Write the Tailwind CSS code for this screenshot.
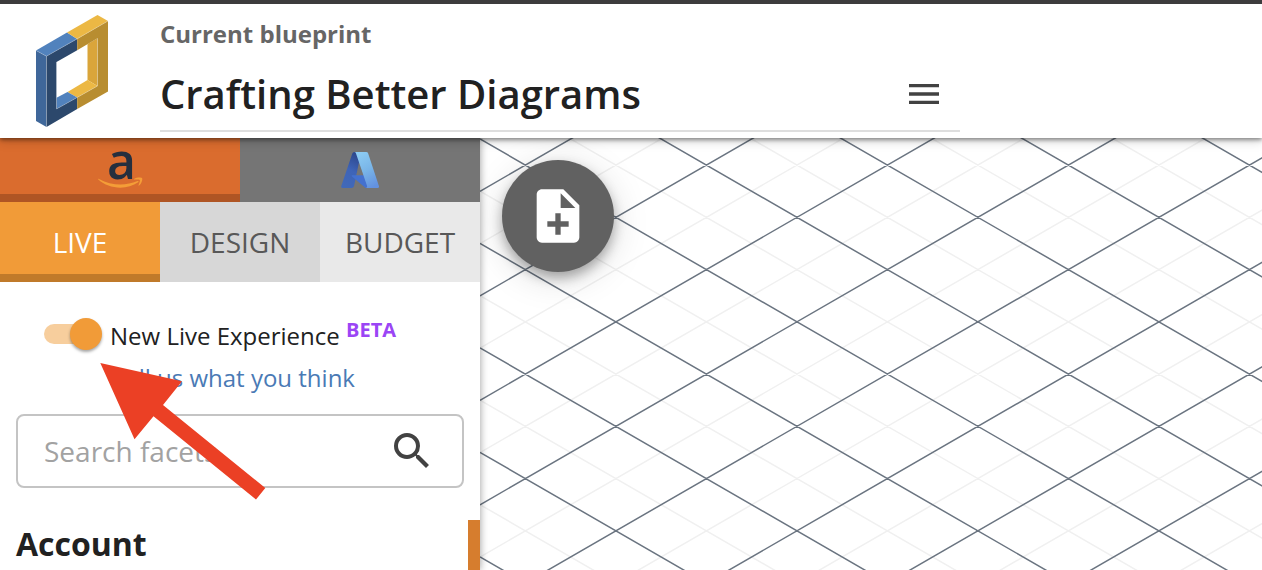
<!DOCTYPE html>
<html lang="en">
<head>
<meta charset="utf-8">
<meta name="viewport" content="width=device-width, initial-scale=1">
<title>Crafting Better Diagrams</title>
<script src="https://cdn.jsdelivr.net/npm/@tailwindcss/browser@4"></script>
</head>
<body class="flex h-screen flex-col overflow-hidden bg-white font-['Open_Sans',sans-serif] text-[#212121]">
  <header class="relative z-20 flex shrink-0 border-t-4 border-[#3d3c3d] bg-white pb-1.5 shadow-[0_2px_4px_0px_rgba(0,0,0,0.4),0_4px_10px_0px_rgba(0,0,0,0.15)]">
    <a href="#" aria-label="Home" class="w-40 shrink-0 pl-9 pt-2.5">
      <svg class="h-[114px] w-[74px]" viewBox="36 14 74 114" aria-hidden="true">
        <path fill="#5182bd" d="M36 50.5 67 32.5 77.2 39 46.5 56.2z"/>
        <path fill="#ecb844" d="M67 32.5 97.5 15 108 21 77.2 39z"/>
        <path fill="#3f679a" d="M36 50.5 46.5 56.2V127L36 121z"/>
        <path fill="#daa53a" d="M87.5 44 97.5 38.3V86L87.5 80z"/>
        <path fill="#ecb844" d="M87.5 80 97.5 86 77.2 97.5 67.5 92z"/>
        <path fill="#5182bd" d="M56.5 97.7 67.5 92 77.2 97.5 56.5 109z"/>
        <path fill="#2c486c" d="M46.5 56.2 77.2 39V50.2L56.5 62V109L77.2 97.5V109L46.5 127z"/>
        <path fill="#b88d30" d="M77.2 39 108 21V91.5L77.2 109V97.5L97.5 86V38.3L77.2 50.2z"/>
        <path fill="none" stroke="#fff" stroke-opacity=".45" stroke-width=".5" d="M36 50.5 46.5 56.2 108 21M46.5 56.2V127M56.5 62V109L97.5 86V38.3"/>
      </svg>
    </a>
    <div class="flex w-[800px] flex-col border-b-2 border-[#dedede] pt-3.5">
      <label for="blueprint" class="text-2xl font-bold text-[#666]">Current blueprint</label>
      <div class="flex flex-1 items-center pt-2">
        <input id="blueprint" value="Crafting Better Diagrams" class="h-18 min-w-0 flex-1 pb-0.5 text-[40px] font-semibold outline-none">
        <button type="button" aria-label="Menu" class="mr-4">
          <svg class="size-10 fill-[#424242]" viewBox="0 0 24 24"><path d="M3 18h18v-2H3zm0-5h18v-2H3zm0-7v2h18V6z"/></svg>
        </button>
      </div>
    </div>
  </header>

  <div class="flex min-h-0 flex-1">
    <aside class="relative z-10 flex w-[480px] shrink-0 flex-col bg-white shadow-[0_0_8px_rgba(0,0,0,0.4)]">
      <div class="grid h-16 shrink-0 grid-cols-2">
        <button type="button" aria-label="AWS" class="flex justify-center border-b-8 border-[#af5524] bg-[#da6c2e]">
          <svg class="h-14 w-12 overflow-visible" viewBox="0 0 48 56">
            <text x="11" y="41" font-size="50" font-weight="600" fill="#252f3e">a</text>
            <path fill="#f49d37" d="M2.300 41.500c-.4-.3.1-1 .7-.6 12.500 6.700 26 7.200 38.500 2.200.9-.4 1.500.5.700 1.100C31 52.200 13 51.400 2.300 41.500z"/>
            <path fill="#f49d37" d="M38 40.900c2.500-1.600 7-1.700 8-.9.900.900-.2 5.500-2.900 7.600-.5.300-.8.100-.6-.4.700-1.600 1.800-4.500 1.300-5.200-.600-.7-3.700-.5-5.500-.4-.600 0-.7-.4-.3-.7z"/>
          </svg>
        </button>
        <button type="button" aria-label="Azure" class="flex items-center justify-center bg-[#757575]">
          <svg class="h-9 w-[38px]" viewBox="0 0 38 36">
            <defs>
              <linearGradient id="az1" x1=".6" y1="0" x2=".3" y2="1"><stop stop-color="#2d478c"/><stop offset=".5" stop-color="#3e64b8"/><stop offset="1" stop-color="#4169b8"/></linearGradient>
              <linearGradient id="az2" x1=".3" y1="0" x2=".7" y2="1"><stop stop-color="#8ccbf3"/><stop offset=".5" stop-color="#79b5e8"/><stop offset="1" stop-color="#6391df"/></linearGradient>
            </defs>
            <path fill="url(#az1)" d="M13.200 0h7L13 34.300Q12.400 36 10.500 36H1.500Q-.3 35.700.2 34.200L11.300 1.500Q11.800 0 13.200 0z"/>
            <path fill="#757575" d="M19.500 15 22.500 24H15z"/>
            <path fill="#4471cf" d="M11 23.300H23.500L27 36H25.500Q24.700 36 24 35.400L11 24.600Q10.200 23.500 11 23.300z"/>
            <path fill="url(#az2)" d="M13.200 0H25.200Q26.700 0 27.100 1.300L38 34.200Q38.300 36 36.600 36H24.800Q26.600 35.500 26 33.800L15 1.400Q14.600 0 13.200 0z"/>
          </svg>
        </button>
      </div>
      <nav class="grid h-20 shrink-0 grid-cols-3 text-[28px]">
        <button type="button" class="border-b-8 border-[#c07a2a] bg-[#f19b38] pt-2 text-white">LIVE</button>
        <button type="button" class="bg-[#d7d7d7] text-[#585858]">DESIGN</button>
        <button type="button" class="bg-[#e9e9e9] text-[#585858]">BUDGET</button>
      </nav>

      <div class="flex flex-col pt-8">
        <label class="flex h-11 items-center gap-2 pl-11 text-2xl">
          <input type="checkbox" role="switch" checked class="relative mb-1 h-5 w-[58px] appearance-none bg-[linear-gradient(90deg,#f7ce9d,#f7ce9d)] bg-[length:48px_20px] bg-no-repeat rounded-l-full after:absolute after:-top-1.5 after:right-0 after:size-8 after:rounded-full after:bg-[#f19b38] after:shadow-[0_2px_3px_rgba(0,0,0,0.35)]">
          <span>New Live Experience <sup class="text-xl font-bold -top-2 text-[#9b45f5]">BETA</sup></span>
        </label>
        <a href="#" class="ml-28 mt-1 self-start text-2xl text-[#4a7ab5]">Tell us what you think</a>
      </div>
      <div class="mx-4 mt-5 flex h-[74px] shrink-0 items-center rounded-lg border-2 border-[#c4c4c4] pl-[26px] pr-[26px]">
        <input type="search" aria-label="Search facets" placeholder="Search facets" class="h-full min-w-0 flex-1 text-[28px] outline-none placeholder:text-[#a2a2a2]">
        <button type="button" aria-label="Search">
          <svg class="size-12 fill-[#424242]" viewBox="0 0 24 24"><path d="M15.500 14h-.79l-.28-.27A6.471 6.471 0 0 0 16 9.500 6.500 6.500 0 1 0 9.500 16c1.610 0 3.090-.59 4.230-1.570l.27.28v.79l5 4.990L20.490 19l-4.990-5zm-6 0C7.010 14 5 11.990 5 9.500S7.010 5 9.500 5 14 7.010 14 9.500 11.990 14 9.500 14z"/></svg>
        </button>
      </div>
      <div class="mt-8 flex min-h-0 flex-1 justify-between pl-4">
        <h2 class="text-[32px] font-bold">Account</h2>
        <div class="w-3 bg-[#d67d2e]"></div>
      </div>

      <!-- pointer to the switch -->
      <svg class="pointer-events-none absolute left-[100px] top-[225px] h-[137px] w-[166px]" viewBox="100 363 166 137" aria-hidden="true">
        <path fill="#eb4025" d="M100.300 363 182 381.300 163 405 265.300 488 256 499.500 153.500 416.300 134.500 439.300z"/>
      </svg>
    </aside>

    <main class="relative min-w-0 flex-1 overflow-hidden bg-white">
      <svg class="absolute inset-0 size-full" fill="none" aria-hidden="true">
        <path id="minor" stroke="#f0f0f0" stroke-width="1.500"/>
        <path id="major" stroke="#6a7480" stroke-width="1.500"/>
      </svg>
      <button type="button" aria-label="New blueprint" class="relative ml-[22px] mt-[22px] flex size-28 items-center justify-center rounded-full bg-[#616161] shadow-[0_6px_12px_rgba(0,0,0,0.3),0_6px_36px_rgba(0,0,0,0.15)]">
        <svg class="size-16 fill-white" viewBox="0 0 24 24"><path d="M14 2H6c-1.100 0-1.990.9-1.990 2L4 20c0 1.100.89 2 1.990 2H18c1.100 0 2-.9 2-2V8l-6-6zm2 14h-3v3h-2v-3H8v-2h3v-3h2v3h3v2zm-3-7V3.500L18.500 9H13z"/></svg>
      </button>
    </main>
  </div>

<script>
  // Isometric grid: one major line per tile, one minor line halfway between.
  // The lines reach past any common window size; the svg clips them.
  const tileW = 181, tileH = 104.5, originX = 45.4, originY = 27.1;
  const extent = 4000, count = 50, slope = tileH / tileW;
  function lines(shift) {
    let d = '';
    for (let k = -count; k <= count; k++) {
      const y = originY + (k + shift) * tileH;
      d += `M0 ${y - originX * slope}L${extent} ${y + (extent - originX) * slope}`;
      d += `M0 ${y + originX * slope}L${extent} ${y - (extent - originX) * slope}`;
    }
    return d;
  }
  document.getElementById('minor').setAttribute('d', lines(0.5));
  document.getElementById('major').setAttribute('d', lines(0));
</script>
</body>
</html>
